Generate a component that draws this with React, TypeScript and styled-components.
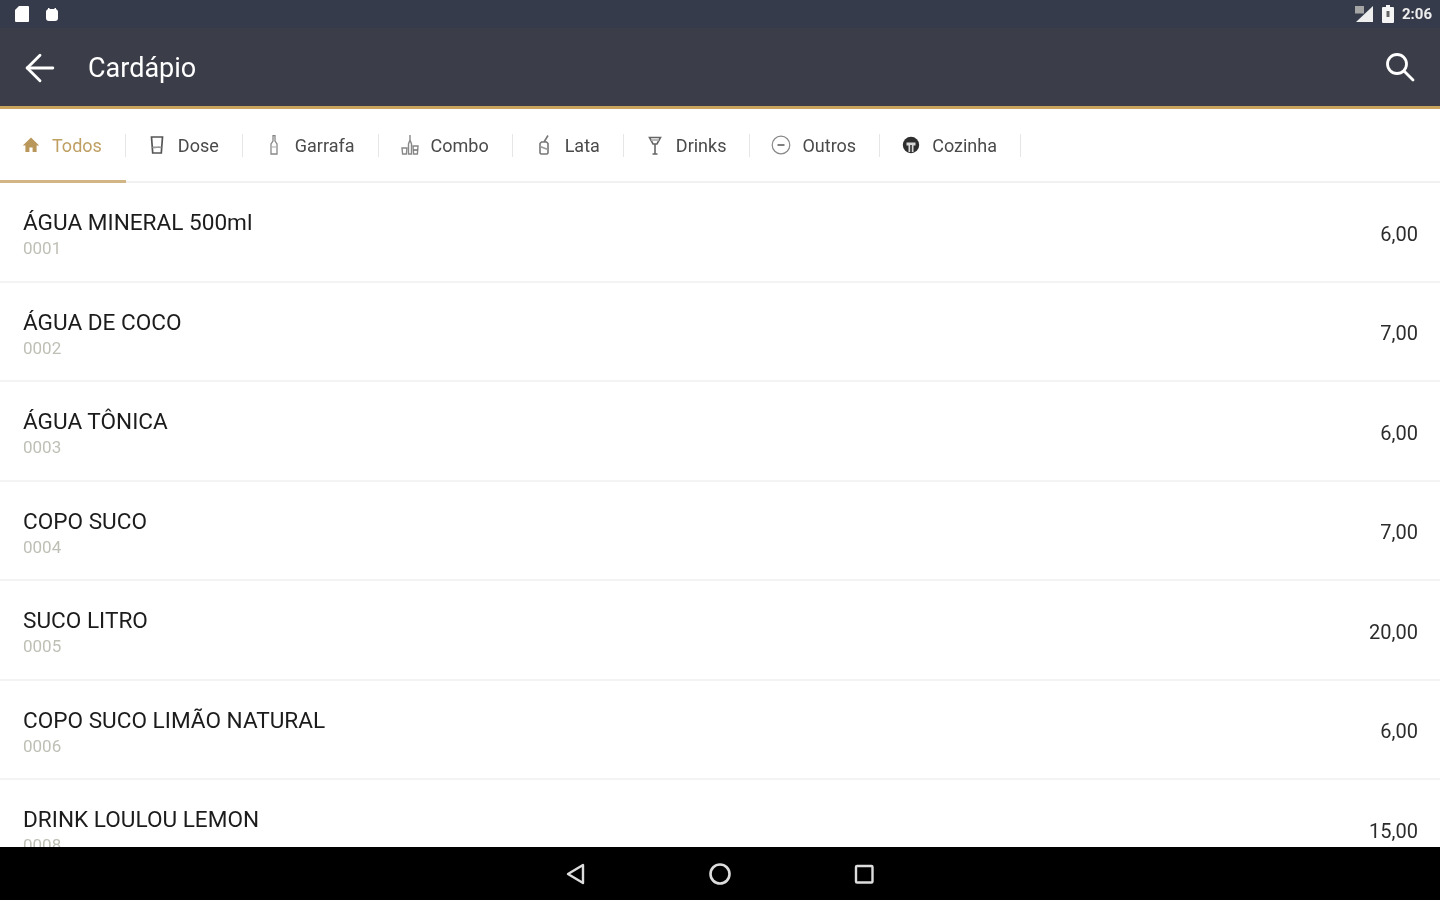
import React from 'react';
import styled, {createGlobalStyle, css} from 'styled-components';
import {ArrowLeft} from 'lucide-react';

const GlobalStyle = createGlobalStyle`
  html, body {
    margin: 0;
    padding: 0;
    height: 100%;
    background: #fff;
    font-family: Roboto, "Liberation Sans", sans-serif;
    overflow: hidden;
  }
`;

interface Product {
    name: string;
    code: string;
    price: string;
}

const products: Product[] = [
    {name: 'ÁGUA MINERAL 500ml', code: '0001', price: '6,00'},
    {name: 'ÁGUA DE COCO', code: '0002', price: '7,00'},
    {name: 'ÁGUA TÔNICA', code: '0003', price: '6,00'},
    {name: 'COPO SUCO', code: '0004', price: '7,00'},
    {name: 'SUCO LITRO', code: '0005', price: '20,00'},
    {name: 'COPO SUCO LIMÃO NATURAL', code: '0006', price: '6,00'},
    {name: 'DRINK LOULOU LEMON', code: '0008', price: '15,00'},
];

const HomeIcon = () => (
    <svg width="18" height="18" viewBox="0 0 18 18"><path d="M9 1.5 .8 9.5h2.6V16h4v-4.5h3.2V16h4V9.5h2.6z" fill="#b9975b" /></svg>
);
const DoseIcon = () => (
    <svg width="18" height="20" viewBox="0 0 18 20" fill="none" stroke="#555" strokeWidth="1.7"><path d="M3.500 2h11l-1.200 16H4.700z" /><path d="M4.500 12c3 1.500 5-1 9 .5" stroke="#999" /></svg>
);
const BottleIcon = () => (
    <svg width="18" height="20" viewBox="0 0 18 20" fill="none" stroke="#888" strokeWidth="1.3"><path d="M8 .5h2v5.500l2 3V19H6V9l2-3z" /><path d="M6.500 12h5" stroke="#bbb" /></svg>
);
const ComboIcon = () => (
    <svg width="20" height="20" viewBox="0 0 20 20" fill="none" stroke="#888" strokeWidth="1.4"><path d="M10 0v5M8.500 19V9L10 5l1.500 4v10z" /><path d="M2 13h5l-.6 6H2.600zM13 11h5l-.6 8h-3.800z" /><path d="M13.500 15h4" stroke="#666" /></svg>
);
const CanIcon = () => (
    <svg width="18" height="20" viewBox="0 0 18 20" fill="none" stroke="#777" strokeWidth="1.6"><path d="M5 8.500 6.500 7h5L13 8.500V18l-1 1H6l-1-1zM9 7l4-6.500" /><path d="M5 11.500l8 3" stroke="#999" /></svg>
);
const DrinkIcon = () => (
    <svg width="18" height="20" viewBox="0 0 18 20" fill="none" stroke="#666" strokeWidth="1.6"><path d="M3.500 2.500h11L11 9H7zM9 9v9.500M6.500 19h5" /><path d="M5 5h8" stroke="#aaa" /></svg>
);
const OthersIcon = () => (
    <svg width="20" height="20" viewBox="0 0 20 20" fill="none" stroke="#888" strokeWidth="1.2"><circle cx="10" cy="10" r="8.800" /><path d="M6.500 10h7" strokeWidth="1.500" stroke="#555" /></svg>
);
const KitchenIcon = () => (
    <svg width="18" height="18" viewBox="0 0 18 18"><circle cx="9" cy="9" r="8.200" fill="#2e2e2e" /><path d="M4.500 6.500h9v3h-2V16H6.500V9.500h-2z" fill="#d8d8d8" /><path d="M8.200 9h1.600v7H8.200z" fill="#2e2e2e" /></svg>
);

const tabs = [
    {label: 'Todos', icon: <HomeIcon />},
    {label: 'Dose', icon: <DoseIcon />},
    {label: 'Garrafa', icon: <BottleIcon />},
    {label: 'Combo', icon: <ComboIcon />},
    {label: 'Lata', icon: <CanIcon />},
    {label: 'Drinks', icon: <DrinkIcon />},
    {label: 'Outros', icon: <OthersIcon />},
    {label: 'Cozinha', icon: <KitchenIcon />},
];

const App: React.FC = () => (
    <Screen>
        <GlobalStyle />
        <StatusBar>
            <StatusGroup>
                <svg width="16" height="18" viewBox="0 0 16 18"><path d="M5 1h9a1 1 0 0 1 1 1v14a1 1 0 0 1-1 1H2a1 1 0 0 1-1-1V5z" fill="#fff" /></svg>
                <svg width="14" height="15" viewBox="0 0 14 15"><path d="M3 1h1.500v1h5V1H11v1.200c1.200.3 2 1.300 2 2.800v6a3 3 0 0 1-3 3H4a3 3 0 0 1-3-3V5c0-1.500.8-2.500 2-2.800z" fill="#fff" /></svg>
            </StatusGroup>
            <RightStatus>
                <svg width="20" height="16" viewBox="0 0 20 16"><path d="M19 0v16H2z" fill="#eee" /><path d="M1 0h9v7.500H1z" fill="#a5a5a5" /></svg>
                <svg width="12" height="18" viewBox="0 0 12 18"><path d="M4 0h4v2h3a1 1 0 0 1 1 1v14a1 1 0 0 1-1 1H1a1 1 0 0 1-1-1V3a1 1 0 0 1 1-1h3z" fill="#f5f5f5" /><path d="M4.500 6h3v6h-3z" fill="#666" /></svg>
                <Clock>2:06</Clock>
            </RightStatus>
        </StatusBar>
        <Toolbar>
            <ToolbarLeft>
                <ArrowLeft size={44} color="#fff" strokeWidth={1.55} />
                <Title>Cardápio</Title>
            </ToolbarLeft>
            <SearchButton>
                <svg width="34" height="34" viewBox="0 0 34 34" fill="none" stroke="#fff" strokeWidth="2.8" strokeLinecap="round"><circle cx="14" cy="14" r="9.500" /><path d="m21 21 9 9" /></svg>
            </SearchButton>
        </Toolbar>
        <TabBar>
            {tabs.map((tab, i) => (
                <Tab key={tab.label} $active={i === 0}>
                    <TabIcon>{tab.icon}</TabIcon>
                    <TabLabel $active={i === 0}>{tab.label}</TabLabel>
                </Tab>
            ))}
        </TabBar>
        <List>
            {products.map(p => (
                <Row key={p.code}>
                    <RowInfo>
                        <Name>{p.name}</Name>
                        <Code>{p.code}</Code>
                    </RowInfo>
                    <Price>{p.price}</Price>
                </Row>
            ))}
        </List>
        <NavBar>
            <svg width="24" height="24" viewBox="0 0 24 24" fill="none" stroke="#ddd" strokeWidth="2.4"><path d="M19 3v18L4 12z" strokeLinejoin="round" /></svg>
            <svg width="24" height="24" viewBox="0 0 24 24" fill="none" stroke="#ddd" strokeWidth="2.6"><circle cx="12" cy="12" r="9.500" /></svg>
            <svg width="24" height="24" viewBox="0 0 24 24" fill="none" stroke="#ddd" strokeWidth="2.4"><rect x="4" y="4" width="16.500" height="16.500" rx="1" /></svg>
        </NavBar>
    </Screen>
);

export default App;

// the reference is an upscaled capture, so its content is soft
const soft = css`
  filter: blur(0.7px);
`;

const Screen = styled.div`
  width: 1440px;
  height: 900px;
  display: flex;
  flex-direction: column;
  overflow: hidden;
`;

const StatusBar = styled.div`
  height: 28px;
  flex: none;
  box-sizing: border-box;
  padding: 0 8px 0 14px;
  background: #363b4b;
  display: flex;
  align-items: center;
  justify-content: space-between;
`;

const StatusGroup = styled.div`
  ${soft}
  display: flex;
  align-items: center;
  gap: 15px;
`;

const RightStatus = styled.div`
  ${soft}
  display: flex;
  align-items: center;
  gap: 8px;
`;

const Clock = styled.span`
  color: #eee;
  font-size: 15px;
  font-weight: 700;
`;

const Toolbar = styled.div`
  height: 81px;
  flex: none;
  box-sizing: border-box;
  padding: 0 23px 0 18px;
  background: #3b3e48;
  border-bottom: 3px solid #c9a45c;
  display: flex;
  align-items: center;
  justify-content: space-between;
`;

const ToolbarLeft = styled.div`
  ${soft}
  display: flex;
  align-items: center;
  gap: 26px;
  padding-top: 1px;
`;

const SearchButton = styled.div`
  ${soft}
  display: flex;
`;

const Title = styled.h1`
  margin: 0;
  color: #fff;
  font-size: 27px;
  font-weight: 400;
`;

const TabBar = styled.div`
  height: 74px;
  flex: none;
  box-sizing: border-box;
  display: flex;
  border-bottom: 2px solid #f1f1f1;
  background: #fff;
`;

const Tab = styled.div<{$active: boolean}>`
  position: relative;
  height: 74px;
  box-sizing: border-box;
  padding: 1px 24px 0 21px;
  display: flex;
  align-items: center;
  gap: 11px;
  border-bottom: 3px solid ${p => (p.$active ? '#d2b584' : 'transparent')};
  &::after {
    content: '';
    position: absolute;
    right: 0;
    top: 25px;
    height: 23px;
    width: 1px;
    background: #e6e6e6;
  }
`;

const TabIcon = styled.span`
  ${soft}
  width: 20px;
  display: flex;
  justify-content: center;
`;

const TabLabel = styled.span<{$active: boolean}>`
  ${soft}
  font-size: 18px;
  color: ${p => (p.$active ? '#bf9f62' : '#4a4a4a')};
`;

const List = styled.div`
  flex: 1;
  min-height: 0;
  overflow: hidden;
`;

const Row = styled.div`
  height: 99.5px;
  box-sizing: border-box;
  padding: 0 22px 0 23px;
  display: flex;
  align-items: center;
  justify-content: space-between;
  border-bottom: 2px solid #f3f3f3;
`;

const RowInfo = styled.div`
  ${soft}
  display: flex;
  flex-direction: column;
  gap: 3px;
  margin-top: 3px;
`;

const Name = styled.div`
  font-size: 22.6px;
  line-height: 27px;
  color: #1c1c1c;
`;

const Code = styled.div`
  font-size: 17px;
  line-height: 18px;
  color: #bfbfb6;
`;

const Price = styled.div`
  ${soft}
  font-size: 20px;
  color: #2c2c2c;
  margin-top: 4px;
`;

const NavBar = styled.div`
  height: 53px;
  flex: none;
  background: #000;
  display: flex;
  align-items: center;
  justify-content: center;
  gap: 120px;
  & > svg {
    ${soft}
  }
`;
